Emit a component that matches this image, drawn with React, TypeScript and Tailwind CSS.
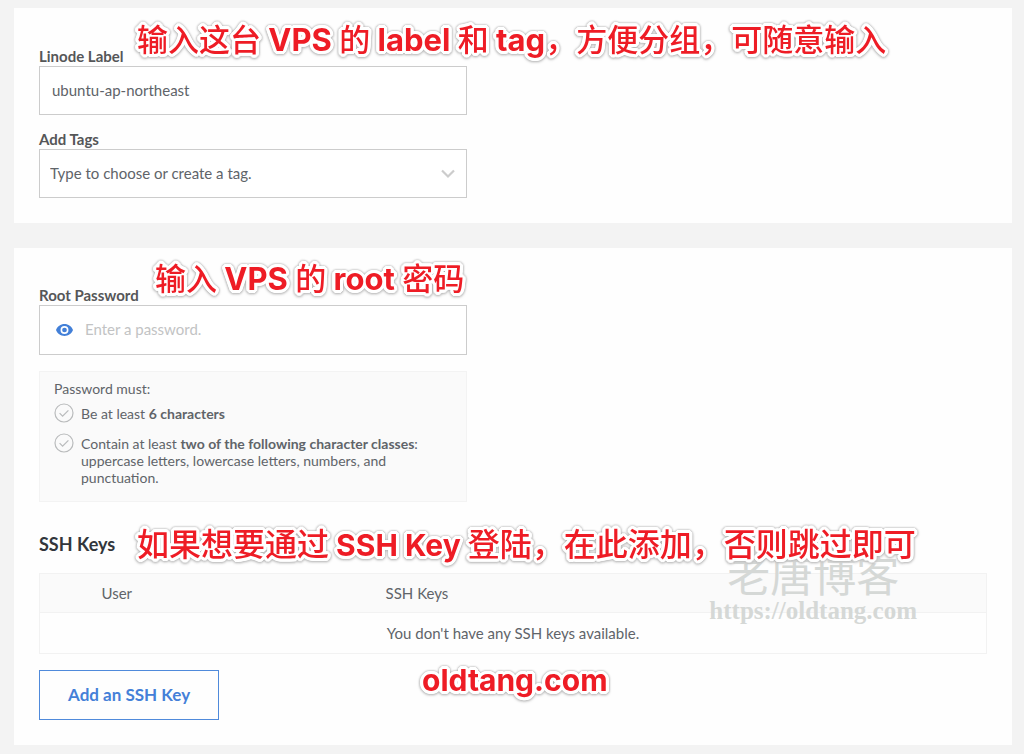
import React from "react";

const noteFont =
  "font-['Inter','Noto_Sans_CJK_SC',sans-serif] font-bold whitespace-nowrap text-[#ee1c25] leading-10 [text-shadow:3px_0_#fff,3px_1px_#fff,2px_2px_#fff,1px_3px_#fff,0_3px_#fff,-1px_3px_#fff,-2px_2px_#fff,-3px_1px_#fff,-3px_0_#fff,-3px_-1px_#fff,-2px_-2px_#fff,-1px_-3px_#fff,0_-3px_#fff,1px_-3px_#fff,2px_-2px_#fff,3px_-1px_#fff] [filter:drop-shadow(0_0_1px_#aaaaaa)_drop-shadow(0_1px_1px_#cccccc)]";

function Cjk({ children }: { children: React.ReactNode }) {
  return <span className="font-medium">{children}</span>;
}

function Note({ place, children }: { place: string; children: React.ReactNode }) {
  return <p className={`pointer-events-none absolute z-10 ${noteFont} ${place}`}>{children}</p>;
}

function Requirement({ children }: { children: React.ReactNode }) {
  return (
    <li className="flex items-start gap-[7px]">
      <svg className="size-5 shrink-0" viewBox="0 0 20 20" fill="none" stroke="#b9bbbc" aria-hidden="true">
        <circle cx="10" cy="10" r="9" strokeWidth="1.2" />
        <path d="M5.600 10.200 8.600 13.200 14.400 7.400" strokeWidth="1.2" />
      </svg>
      <span className="pt-0.5">{children}</span>
    </li>
  );
}

const labelClass = "block h-5 text-[15px] leading-5 font-bold text-[#555658]";
const fieldClass =
  "block h-[49px] w-full border border-[#cccccc] bg-white pb-0.5 text-[15px] text-[#606469] outline-none";

export default function App() {
  return (
    <main className="flex min-h-screen flex-col gap-[25px] bg-[#f3f3f3] pt-2 pr-3 pb-[9px] pl-3.5 font-['Lato','Noto_Sans_CJK_SC',sans-serif] text-[15px] text-[#606469]">
      <section className="relative bg-[#fefefe] px-[25px] pt-[38px] pb-[25px]">
        <Note place="left-[123px] top-3 text-[31px]">
          <Cjk>输入这台</Cjk> VPS <Cjk>的</Cjk> label <Cjk>和</Cjk> tag<Cjk>，方便分组，可随意输入</Cjk>
        </Note>
        <div className="flex max-w-[428px] flex-col gap-3.5">
          <div>
            <label htmlFor="linode-label" className={labelClass}>Linode Label</label>
            <input id="linode-label" type="text" defaultValue="ubuntu-ap-northeast" className={`${fieldClass} px-3`} />
          </div>
          <div>
            <label htmlFor="tags" className={labelClass}>Add Tags</label>
            <div className="relative">
              <input
                id="tags"
                type="text"
                role="combobox"
                aria-expanded="false"
                placeholder="Type to choose or create a tag."
                className={`${fieldClass} pr-10 pl-2.5 placeholder:text-[#606469]`}
              />
              <svg className="pointer-events-none absolute top-5 right-3 h-2.5 w-3.5" viewBox="0 0 14 10" fill="none" stroke="#cccccc" strokeWidth="2.2" aria-hidden="true">
                <path d="M1 1.500 7 7.500 13 1.500" />
              </svg>
            </div>
          </div>
        </div>
      </section>

      <section className="relative bg-[#fefefe] px-[25px] pt-[37px] pb-[25px]">
        <Note place="left-[141px] top-[11px] text-[31px]">
          <Cjk>输入</Cjk> VPS <Cjk>的</Cjk> root <Cjk>密码</Cjk>
        </Note>
        <div className="max-w-[428px]">
          <label htmlFor="root-password" className={labelClass}>Root Password</label>
          <div className="flex h-[50px] items-center border border-[#cccccc] bg-white pl-4">
            <button type="button" aria-label="Show password" className="shrink-0">
              <svg className="h-5 w-[17px]" viewBox="0 0 18 20" aria-hidden="true">
                <path fill="#4380d8" fillRule="evenodd" d="M9 3.700C4.900 3.700 1.400 6.300 0 10c1.400 3.700 4.900 6.300 9 6.300s7.600-2.600 9-6.300c-1.400-3.700-4.900-6.300-9-6.300Zm0 10.500a4.200 4.200 0 1 1 0-8.400 4.200 4.200 0 0 1 0 8.400Zm0-6.700a2.500 2.500 0 1 0 0 5 2.500 2.500 0 0 0 0-5Z" />
              </svg>
            </button>
            <input
              id="root-password"
              type="password"
              placeholder="Enter a password."
              className="h-full w-full min-w-0 bg-transparent px-3 pb-0.5 text-[15px] outline-none placeholder:text-[#c2c3c4]"
            />
          </div>
          <div className="mt-4 border border-[#f3f3f3] bg-[#fafafa] px-3.5 pt-2 pb-[15px] text-sm leading-[17px]">
            <p>Password must:</p>
            <ul className="mt-1.5 flex flex-col gap-2.5">
              <Requirement>
                Be at least <strong>6 characters</strong>
              </Requirement>
              <Requirement>
                Contain at least <strong>two of the following character classes</strong>: uppercase letters, lowercase
                letters, numbers, and punctuation.
              </Requirement>
            </ul>
          </div>
        </div>

        <div className="relative mt-[30px]">
          <h2 className="text-lg leading-6 font-bold text-[#32363c]">SSH Keys</h2>
          <Note place="left-[98px] -top-[7px] text-[30px]">
            <span className="text-[32px] font-medium">如果想要通过</span> SSH Key{" "}
            <span className="text-[32px] font-medium">登陆，在此添加，否则跳过即可</span>
          </Note>
        </div>

        <div className="relative mt-[17px]">
          <table className="w-full table-fixed border-collapse border border-[#f2f2f2]">
            <colgroup>
              <col className="w-[47px]" />
              <col className="w-[30%]" />
              <col />
            </colgroup>
            <thead className="bg-[#fafafa] text-left">
              <tr className="h-[39px] border-b border-[#f2f2f2]">
                <td />
                <th scope="col" className="pl-[15px] font-normal">User</th>
                <th scope="col" className="pl-[15px] font-normal">SSH Keys</th>
              </tr>
            </thead>
            <tbody>
              <tr className="h-[41px]">
                <td colSpan={3} className="text-center">You don't have any SSH keys available.</td>
              </tr>
            </tbody>
          </table>
          <div className="pointer-events-none absolute -top-[26px] right-[70px] text-center text-[#d5d8d6]">
            <p className="font-['Noto_Sans_CJK_SC',sans-serif] text-[43px] leading-[52px]">老唐博客</p>
            <p className="font-['Liberation_Serif',serif] text-[25px] leading-6 font-bold">https://oldtang.com</p>
          </div>
        </div>

        <div className="relative mt-4 flex">
          <button type="button" className="h-[50px] border border-[#4f8adb] px-7 text-[17px] font-bold text-[#4480d8]">
            Add an SSH Key
          </button>
          <Note place="left-[383px] -top-2.5 text-[30px]">oldtang.com</Note>
        </div>
      </section>
    </main>
  );
}
